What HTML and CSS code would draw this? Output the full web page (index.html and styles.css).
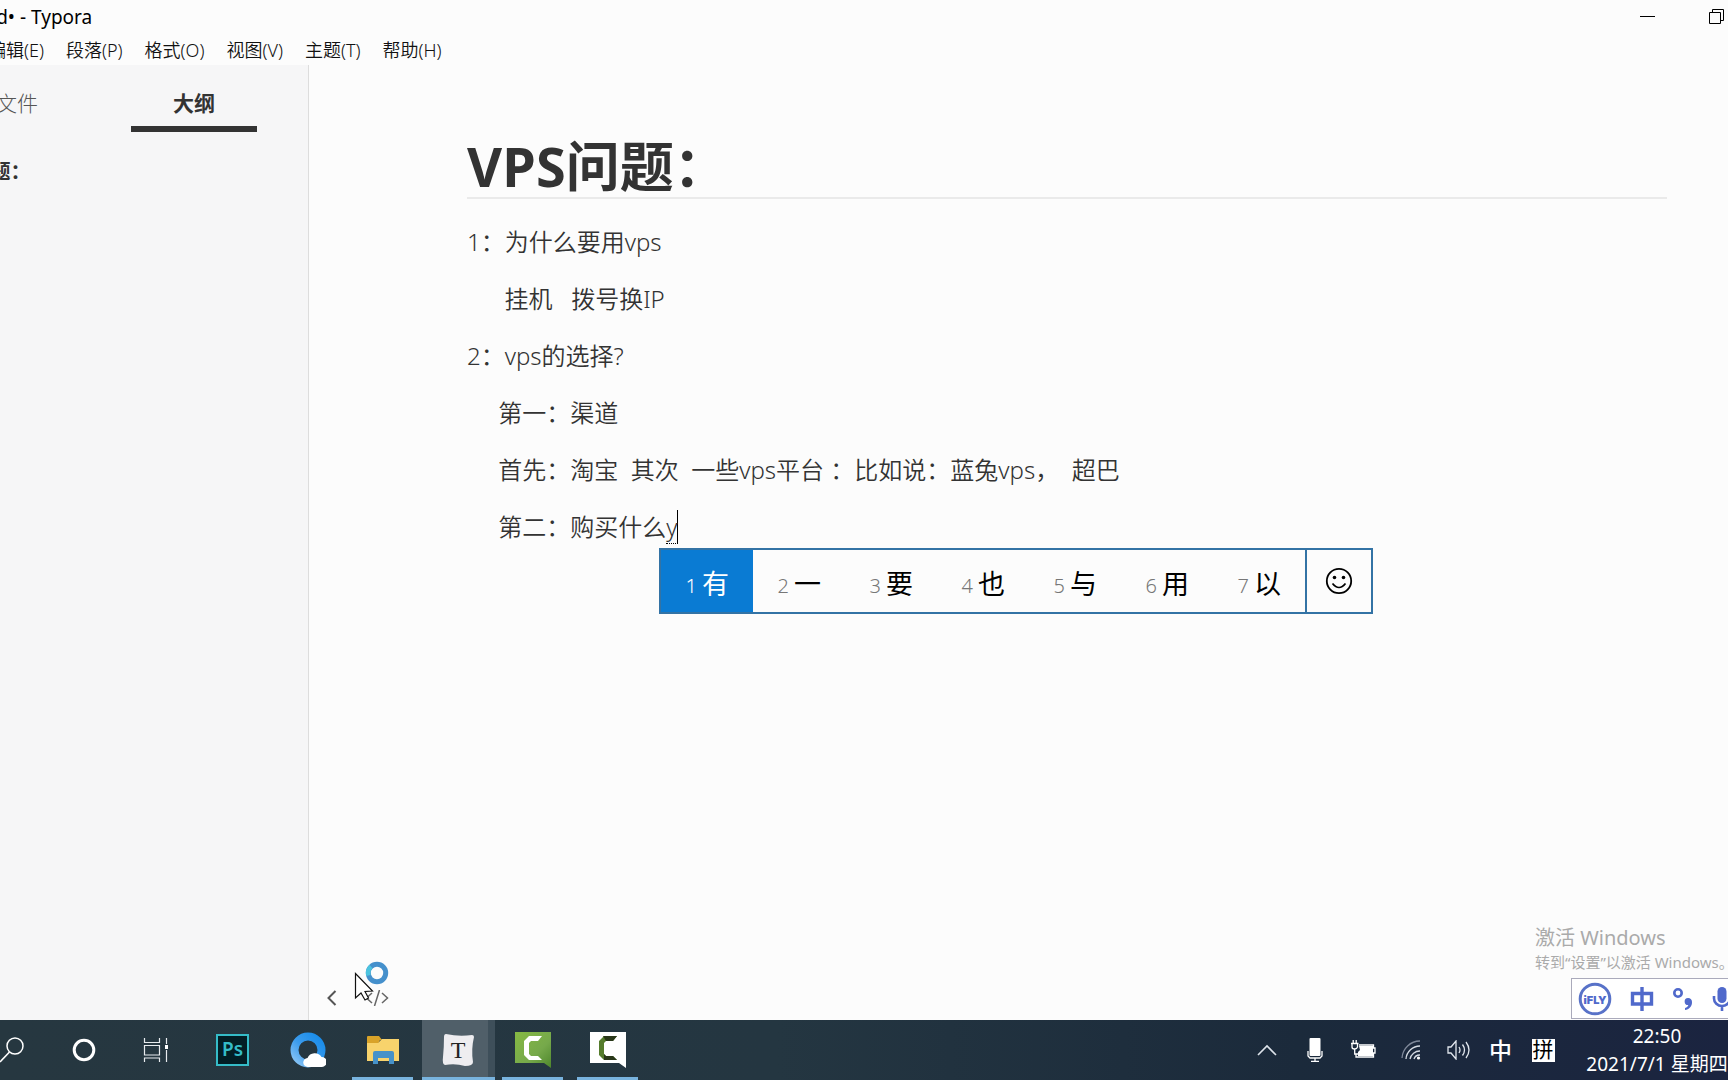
FILE: index.html
```html
<!DOCTYPE html>
<html lang="zh-CN">
<head>
<meta charset="utf-8">
<title>VPS问题.md• - Typora</title>
<link rel="stylesheet" href="styles.css">
</head>
<body>
<div class="window">
  <header class="titlebar">
    <span class="title">VPS问题.md• - Typora</span>
    <div class="controls">
      <button class="control" aria-label="最小化"><svg width="16" height="16" viewBox="0 0 16 16"><path d="M0 7.500h15" stroke="#000" fill="none"/></svg></button>
      <button class="control" aria-label="还原"><svg width="16" height="16" viewBox="0 0 16 16"><path d="M.5 3.500h11v11H.5zM3.500 3.500v-3h11v11h-3" stroke="#000" fill="none"/></svg></button>
    </div>
  </header>
  <nav class="menubar">
    <button class="menu">编辑(E)</button>
    <button class="menu">段落(P)</button>
    <button class="menu">格式(O)</button>
    <button class="menu">视图(V)</button>
    <button class="menu">主题(T)</button>
    <button class="menu">帮助(H)</button>
  </nav>
  <div class="workspace">
    <aside class="sidebar">
      <div class="tabs">
        <button class="tab">文件</button>
        <button class="tab tab-active">大纲</button>
      </div>
      <a class="outline" href="#top">VPS问题：</a>
    </aside>
    <main class="editor">
      <article class="document">
        <h1 id="top">VPS问题：</h1>
        <p>1：为什么要用vps</p>
        <p>&nbsp;     挂机   拨号换IP</p>
        <p>2：vps的选择?</p>
        <p>&nbsp;    第一：渠道</p>
        <p>&nbsp;    首先：淘宝  其次  一些vps平台 ：比如说：蓝兔vps，  超巴</p>
        <p>&nbsp;    第二：购买什么<span class="composing">y<span class="candidates">
          <button class="candidate chosen"><small>1</small>有</button>
          <button class="candidate"><small>2</small>一</button>
          <button class="candidate"><small>3</small>要</button>
          <button class="candidate"><small>4</small>也</button>
          <button class="candidate"><small>5</small>与</button>
          <button class="candidate"><small>6</small>用</button>
          <button class="candidate"><small>7</small>以</button>
          <button class="emoji" aria-label="表情"><svg width="28" height="28" viewBox="0 0 28 28"><circle cx="14" cy="14" r="12.200" fill="none" stroke="#000" stroke-width="1.800"/><circle cx="9.500" cy="10.500" r="1.800"/><circle cx="18.500" cy="10.500" r="1.800"/><path d="M7.500 16.500Q14 24.500 20.500 16.500" fill="none" stroke="#000" stroke-width="1.700"/></svg></button>
        </span></span></p>
      </article>
      <div class="footer">
        <button class="foot" aria-label="侧边栏"><svg width="10" height="16" viewBox="0 0 10 16"><path d="M8.500 1L1.500 8l7 7" fill="none" stroke="#555" stroke-width="2"/></svg></button>
        <button class="foot" aria-label="源代码模式"><svg width="24" height="16" viewBox="0 0 24 16"><path d="M7 3L1.500 8 7 13M17 3l5.500 5L17 13M14.500 0l-5 16" fill="none" stroke="#666" stroke-width="1.500"/></svg></button>
      </div>
      <svg class="pointer" width="36" height="40" viewBox="0 0 36 40"><circle cx="23" cy="12" r="8.700" fill="none" stroke="#4590cc" stroke-width="5"/><path d="M14.500 14.500a9 9 0 0 1 2.500-9" fill="none" stroke="#4bc3df" stroke-width="4.500"/><path d="M1.500 12.500v24.500l5.500-5 4 7 3.500-2-3.500-6.500 7.500-.5z" fill="#fff" stroke="#111" stroke-width="1.200"/></svg>
      <div class="watermark"><strong>激活 Windows</strong><span>转到“设置”以激活 Windows。</span></div>
      <div class="ime">
        <svg width="34" height="34" viewBox="0 0 34 34"><circle cx="17" cy="17" r="14.800" fill="none" stroke="#5872c8" stroke-width="3"/><text x="17" y="21.500" text-anchor="middle" class="ifly">iFLY</text></svg>
        <svg width="24" height="24" viewBox="0 0 24 24"><path d="M2.500 6.500h19v10.500h-19zM12 0v24" fill="none" stroke="#5069cb" stroke-width="3.400"/></svg>
        <svg width="22" height="24" viewBox="0 0 22 24"><circle cx="6" cy="6" r="3.700" fill="none" stroke="#5069cb" stroke-width="2.600"/><path d="M16 11a4 4 0 0 1 4 4.500c0 4-3 7-7 7.500v-2c2-.6 3-1.600 3.300-3A3.500 3.500 0 1 1 16 11z" fill="#5069cb"/></svg>
        <svg width="20" height="24" viewBox="0 0 20 24"><rect x="5.500" width="9" height="16" rx="4.500" fill="#5069cb"/><path d="M2 9v2.500a8 7.500 0 0 0 16 0V9M10 19v5" fill="none" stroke="#5069cb" stroke-width="2.600"/></svg>
      </div>
    </main>
  </div>
</div>
<footer class="taskbar">
  <div class="system">
    <button class="sys" aria-label="搜索"><svg width="24" height="26" viewBox="0 0 24 26"><circle cx="15" cy="9" r="8" fill="none" stroke="#fff" stroke-width="1.500"/><path d="M9.500 15L0 25" stroke="#fff" stroke-width="1.600"/></svg></button>
    <button class="sys" aria-label="Cortana"><svg width="24" height="24" viewBox="0 0 24 24"><circle cx="12" cy="12" r="9.800" fill="none" stroke="#fff" stroke-width="3"/></svg></button>
    <button class="sys" aria-label="任务视图"><svg width="26" height="24" viewBox="0 0 26 24"><path d="M1.500 0v4.500h15V0M1.500 7.500h15v9.500h-15zM1.500 24v-4h15v4M23.500 0v6M23.500 12v12" fill="none" stroke="#e8ecef" stroke-width="1.200"/><path d="M22 7h3v4h-3z" fill="#fff"/></svg></button>
  </div>
  <div class="apps">
    <button class="app"><span class="ps">Ps</span></button>
    <button class="app" aria-label="浏览器"><svg width="36" height="36" viewBox="0 0 36 36"><defs><linearGradient id="sky" x1="1" y1="0" x2="0" y2="1"><stop offset="0" stop-color="#168bea"/><stop offset=".55" stop-color="#3c9ced"/><stop offset="1" stop-color="#8bc5f5"/></linearGradient></defs><circle cx="18" cy="18" r="13.500" fill="none" stroke="url(#sky)" stroke-width="8"/><path d="M18 35a4.500 4.500 0 0 1-.5-9 8 8 0 0 1 14-1 5 5 0 0 1 .5 10z" fill="#fff"/></svg></button>
    <button class="app running" aria-label="文件资源管理器"><svg width="34" height="30" viewBox="0 0 34 30"><path d="M1 2q0-1 1-1h11l3 4h-2l-2 4H1z" fill="#d9a329"/><path d="M1 8h11l4-4h17v22H1z" fill="#f8d36c"/><path d="M7 29V18q0-2 2-2h17q2 0 2 2v11h-5v-6H12v6z" fill="#4792c9"/></svg></button>
    <button class="app running current" aria-label="Typora"><svg width="34" height="34" viewBox="0 0 34 34"><path d="M5 1Q18 4 31 2q2 0 2 2-3 12-1 25 0 4-8 4-10-3-20-1-3-1-2-8Q3 14 3 4q0-3 2-3z" fill="#eeedf0"/><text x="17" y="25" text-anchor="middle" class="serif-t">T</text></svg></button>
    <button class="app running" aria-label="Camtasia"><svg width="36" height="36" viewBox="0 0 36 36"><defs><linearGradient id="leaf" x1="0" y1="0" x2="1" y2="1"><stop offset="0" stop-color="#86b943"/><stop offset=".6" stop-color="#76a94b"/><stop offset="1" stop-color="#4d862b"/></linearGradient></defs><path d="M0 0h36v36l-7-5H0z" fill="url(#leaf)"/><path d="M27 4L23 9h-7l-2 2v11l2 2h7l4 4H14l-5-5V9l5-5z" fill="#fff"/></svg></button>
    <button class="app running" aria-label="Camtasia 录像机"><svg width="36" height="36" viewBox="0 0 36 36"><path d="M0 0h36v36l-7-5H0z" fill="#fff"/><path d="M27 4L23 9h-7l-2 2v11l2 2h7l4 4H14l-5-5V9l5-5z" fill="#557c2c"/><path d="M27 4L23 9h-7l-3-5zM14 22l2 2h7l4 4H14z" fill="#293719"/></svg></button>
  </div>
  <div class="tray">
    <button class="icon" aria-label="显示隐藏的图标"><svg width="20" height="12" viewBox="0 0 20 12"><path d="M1 11l9-9 9 9" fill="none" stroke="#dde3ea" stroke-width="1.600"/></svg></button>
    <button class="icon" aria-label="麦克风"><svg width="16" height="24" viewBox="0 0 16 24"><rect x="2.500" width="11" height="18" rx="1" fill="#fff"/><path d="M1 13v5l2 2h10l2-2v-5M8 20v3M4 23.500h8" fill="none" stroke="#fff" stroke-width="1.300"/></svg></button>
    <button class="icon" aria-label="电源"><svg width="26" height="20" viewBox="0 0 26 20"><path d="M9 5h14.500v3H25v5h-1.500v4H6v-3" fill="none" stroke="#fff" stroke-width="1.300"/><path d="M9 6h14v10H8v-4l2-2z" fill="#fff"/><path d="M1 3.500h7.500M2 3.500V7q0 2 2.500 2T7.500 7V3.500M3.200 0v3M6.200 0v3M4.700 9v5H8" fill="none" stroke="#fff" stroke-width="1.300"/></svg></button>
    <button class="icon" aria-label="网络"><svg width="20" height="20" viewBox="0 0 20 20"><path d="M1 18A18 18 0 0 1 19 1" fill="none" stroke="#7f899a" stroke-width="1.300"/><path d="M5 19A14 14 0 0 1 19 6M9 19a10 10 0 0 1 10-8M13 19a6 6 0 0 1 6-4" fill="none" stroke="#d5dbe3" stroke-width="1.300"/><circle cx="17.500" cy="18" r="1.600" fill="#fff"/></svg></button>
    <button class="icon" aria-label="音量"><svg width="24" height="20" viewBox="0 0 24 20"><path d="M1 7h3l5-6v18l-5-6H1zM12 7q2 3 0 6M15.500 4.500q4 5.500 0 11M19 2q6 8 0 16" fill="none" stroke="#e1e6ed" stroke-width="1.300"/></svg></button>
    <button class="lang">中</button>
    <button class="pinyin"><span>拼</span></button>
    <button class="clock"><time>22:50</time><span>2021/7/1 星期四</span></button>
  </div>
</footer>
</body>
</html>
```
FILE: styles.css
```css
* { box-sizing: border-box; }
body {
  margin: 0;
  min-height: 100vh;
  display: flex;
  flex-direction: column;
  overflow: hidden;
  background: #fcfcfc;
  color: #333;
  font-family: "Noto Sans", "Noto Sans CJK SC", sans-serif;
}
button {
  margin: 0;
  padding: 0;
  border: 0;
  background: none;
  color: inherit;
  font: inherit;
  flex: none;
}
svg { display: block; flex: none; }

/* The window hangs over the left edge of the desktop */
.window {
  flex: 1;
  display: flex;
  flex-direction: column;
  margin-left: -120px;
}
.titlebar {
  display: flex;
  align-items: center;
  justify-content: space-between;
  height: 34px;
  padding-left: 22px;
  color: #000;
  font-size: 19px;
  font-weight: 400;
  line-height: 34px;
}
.controls { display: flex; gap: 53px; padding-right: 3px; }
.menubar {
  display: flex;
  align-items: center;
  gap: 22px;
  height: 31px;
  padding-left: 108px;
  color: #111;
  font-size: 18px;
  font-weight: 350;
  line-height: 32px;
}
.workspace { flex: 1; display: flex; }
.sidebar {
  flex: none;
  width: 429px;
  padding: 13px 51px 0 54px;
  border-right: 1px solid #ddd;
  background: #f6f6f7;
}
.tabs { display: flex; justify-content: space-between; padding-left: 20px; }
.tab {
  width: 126px;
  height: 54px;
  border-bottom: 6px solid transparent;
  color: #555;
  font-size: 21px;
  font-weight: 300;
}
.tab-active { border-color: #333; color: #333; font-weight: 700; }
.outline {
  display: block;
  margin-top: 25px;
  color: #333;
  font-size: 20px;
  font-weight: 700;
  line-height: 30px;
  text-decoration: none;
}
.editor { position: relative; flex: 1; padding: 70px 61px 0 158px; }
.document { max-width: 1200px; }
h1 {
  margin: 0 0 24px;
  border-bottom: 2px solid #eaeaea;
  font-family: "Open Sans", "Noto Sans CJK SC", sans-serif;
  font-size: 54px;
  line-height: 62px;
}
p {
  margin: 0 0 19px;
  font-size: 24px;
  font-weight: 350;
  line-height: 38px;
  white-space: pre-wrap;
}
.composing {
  position: relative;
  border-right: 1px solid #000;
  border-bottom: 1px dotted #000;
}
.candidates {
  position: absolute;
  top: 38px;
  left: -7px;
  display: flex;
  height: 66px;
  border: 2px solid #3373a5;
  background: #fcfcfc;
  color: #000;
  white-space: normal;
}
.candidate {
  display: flex;
  align-items: center;
  justify-content: center;
  gap: 5px;
  width: 92px;
  padding-top: 6px;
  font-size: 27px;
  font-weight: 400;
  line-height: 56px;
}
.candidate small { padding-top: 4px; color: #777; font-size: 20px; font-weight: 350; line-height: 52px; }
.chosen { background: #0a7bd3; color: #fff; }
.chosen small { color: #fff; }
.emoji { display: grid; place-items: center; width: 66px; border-left: 2px solid #3373a5; }
.footer { position: absolute; bottom: 14px; left: 18px; display: flex; gap: 28px; }
.pointer { position: absolute; left: 45px; bottom: 19px; }
.watermark {
  position: absolute;
  right: 0;
  bottom: 48px;
  width: 193px;
  color: #aaa;
  font-size: 15px;
  line-height: 20px;
  white-space: nowrap;
}
.watermark strong { display: block; font-size: 20px; font-weight: 400; line-height: 28px; }
.ime {
  position: absolute;
  right: 0;
  bottom: 1px;
  display: flex;
  align-items: center;
  gap: 18px;
  width: 157px;
  height: 41px;
  padding-left: 6px;
  overflow: hidden;
  border: 1px solid #aab;
  border-right: 0;
  background: #fff;
}
.ifly { fill: #5069cb; font: 900 11px "Inter", "Open Sans", sans-serif; }
.taskbar {
  display: flex;
  height: 60px;
  background: linear-gradient(90deg, #263740, #243641 45%, #1b2a3b 75%, #1b2440);
  color: #fff;
}
.system { display: flex; margin-left: -24px; }
.sys { display: grid; place-items: center; width: 72px; }
.apps { display: flex; margin-left: 3px; }
.app { position: relative; display: grid; place-items: center; width: 75px; }
.running::after {
  content: "";
  position: absolute;
  right: 7px;
  bottom: 0;
  left: 7px;
  height: 3px;
  background: #78b3de;
}
.current { background: linear-gradient(90deg, transparent 2px, #505f69 2px 68px, #3e4f5a 68px); }
.current::after { left: 2px; right: 0; }
.ps {
  width: 33px;
  height: 32px;
  border: 2px solid #35bcc8;
  background: #031e25;
  color: #35bcc8;
  font-size: 19px;
  font-weight: 600;
  line-height: 27px;
}
.serif-t { fill: #222; font: 24px "Liberation Serif", serif; }
.tray { display: flex; margin-left: auto; }
.icon { display: grid; place-items: center; width: 48px; }
.lang { width: 35px; font-size: 23px; font-weight: 500; line-height: 56px; }
.pinyin { display: grid; place-items: center; width: 50px; }
.pinyin span { width: 23px; height: 23px; background: #fff; color: #000; font-size: 21px; line-height: 21px; }
.clock {
  display: flex;
  flex-direction: column;
  justify-content: center;
  align-items: center;
  width: 160px;
  padding: 0 1px 0 19px;
  font-size: 19px;
  line-height: 28px;
  white-space: nowrap;
}
```
